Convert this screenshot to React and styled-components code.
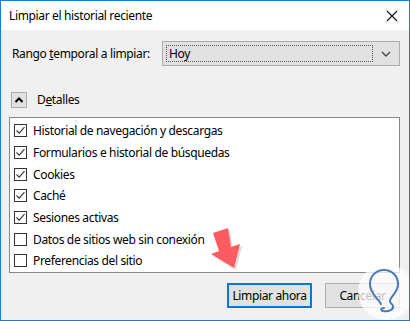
import React from 'react';
import styled, { createGlobalStyle } from 'styled-components';

const GlobalStyle = createGlobalStyle`
  body {
    margin: 0;
    font-family: "Noto Sans", "Open Sans", sans-serif;
    font-size: 12px;
    letter-spacing: -0.35px;
    color: #000;
    background: #fff;
  }
  * { box-sizing: border-box; }
`;

const items = [
  { label: 'Historial de navegación y descargas', checked: true },
  { label: 'Formularios e historial de búsquedas', checked: true },
  { label: 'Cookies', checked: true },
  { label: 'Caché', checked: true },
  { label: 'Sesiones activas', checked: true },
  { label: 'Datos de sitios web sin conexión', checked: false },
  { label: 'Preferencias del sitio', checked: false },
];

function Check({ checked }) {
  return (
    <CheckBox>
      {checked && (
        <svg width="11" height="11" viewBox="0 0 11 11">
          <path d="M1.5 5.5 L4.2 8.2 L9.5 2.2" fill="none" stroke="#333" strokeWidth="1.1" />
        </svg>
      )}
    </CheckBox>
  );
}

export default function App() {
  return (
    <>
      <GlobalStyle />
      <Window>
        <TitleBar>
          <span>Limpiar el historial reciente</span>
          <svg width="12" height="12" viewBox="0 0 12 12">
            <path d="M1 1 L11 11 M11 1 L1 11" stroke="#111" strokeWidth="1.1" />
          </svg>
        </TitleBar>
        <Body>
          <RangeRow>
            <Label>Rango <u>t</u>emporal a limpiar:</Label>
            <Select>
              <FocusRect>Hoy</FocusRect>
              <svg width="10" height="6" viewBox="0 0 10 6">
                <path d="M1 1 L5 5 L9 1" fill="none" stroke="#444" strokeWidth="1.3" />
              </svg>
            </Select>
          </RangeRow>
          <DetailsRow>
            <ToggleButton>
              <svg width="10" height="6" viewBox="0 0 10 6">
                <path d="M1.5 5 L5 1.5 L8.5 5" fill="none" stroke="#000" strokeWidth="2" />
              </svg>
            </ToggleButton>
            <span>D<u>e</u>talles</span>
          </DetailsRow>
          <ListBox>
            {items.map((it) => (
              <Item key={it.label}>
                <Check checked={it.checked} />
                {it.label}
              </Item>
            ))}
          </ListBox>
          <ButtonRow>
            <Button $primary $w={85}>Limpiar ahora</Button>
            <Button $w={75}>Cancelar</Button>
          </ButtonRow>
        </Body>
        <Arrow width="40" height="50" viewBox="0 0 40 50">
          <path d="M7 9 L22 4 L25 23 L34 20 L28 44 L5 30 L13 27 Z" fill="#999" opacity="0.35" transform="translate(2,2)" />
          <path d="M7 9 L22 4 L25 23 L34 20 L28 44 L5 30 L13 27 Z" fill="#fd5c63" />
        </Arrow>
        <Logo width="60" height="60" viewBox="0 0 60 60">
          <circle cx="30" cy="30" r="28" fill="#fff" fillOpacity="0.75" />
          <path
            d="M25 42 C22 36 14 32 14 22 C14 13 21 8 28 8 C36 8 42 14 42 22 C42 30 36 33 34 38 C33 41 36 41 37 44 C38 48 32 50 27 49 C24 48 25 46 28 46"
            fill="none"
            stroke="#4a78b8"
            strokeWidth="2"
            strokeLinecap="round"
          />
        </Logo>
      </Window>
    </>
  );
}

const Window = styled.div`
  position: relative;
  width: 410px;
  height: 321px;
  border: 1px solid #1a7fd4;
  background: #f0f0f0;
  overflow: hidden;
`;

const TitleBar = styled.div`
  height: 29px;
  background: #fff;
  display: flex;
  align-items: center;
  justify-content: space-between;
  padding: 0 11px 0 8px;
  font-size: 12px;
`;

const Body = styled.div`
  padding: 11px 9px 0 8px;
`;

const RangeRow = styled.div`
  display: flex;
  align-items: center;
  justify-content: space-between;
  height: 25px;
`;

const Label = styled.span`
  margin-left: 3px;
`;

const Select = styled.div`
  width: 238px;
  height: 25px;
  border: 1px solid #adadad;
  background: #e1e1e1;
  display: flex;
  align-items: center;
  padding: 0 8px 0 3px;
  gap: 8px;
`;

const FocusRect = styled.div`
  flex: 1;
  height: 17px;
  border: 1px dotted #555;
  display: flex;
  align-items: center;
  padding-left: 2px;
`;

const DetailsRow = styled.div`
  display: flex;
  align-items: center;
  gap: 10px;
  margin-top: 25px;
  padding-left: 2px;
`;

const ToggleButton = styled.div`
  width: 16px;
  height: 16px;
  border: 1px solid #adadad;
  background: #e1e1e1;
  display: flex;
  align-items: center;
  justify-content: center;
`;

const ListBox = styled.div`
  margin-top: 9px;
  height: 156px;
  background: #fff;
  border: 1px solid #828790;
  padding-top: 2px;
`;

const Item = styled.div`
  display: flex;
  align-items: center;
  gap: 6px;
  height: 21.67px;
  padding-left: 4px;
`;

const CheckBox = styled.div`
  width: 13px;
  height: 13px;
  border: 1px solid #333;
  background: #fff;
  display: flex;
  align-items: center;
  justify-content: center;
`;

const ButtonRow = styled.div`
  display: flex;
  justify-content: flex-end;
  gap: 13px;
  margin-top: 10px;
`;

const Button = styled.div`
  width: ${(p) => p.$w}px;
  height: 25px;
  background: #e1e1e1;
  border: ${(p) => (p.$primary ? '2px solid #0078d7' : '1px solid #adadad')};
  display: flex;
  align-items: center;
  justify-content: center;
`;

const Arrow = styled.svg`
  position: absolute;
  left: 205px;
  top: 223px;
`;

const Logo = styled.svg`
  position: absolute;
  left: 355px;
  top: 261px;
`;
